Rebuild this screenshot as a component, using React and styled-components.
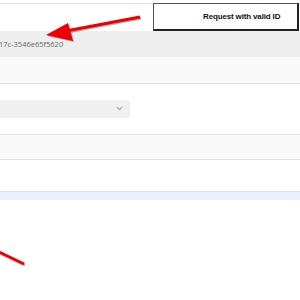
import React from 'react';
import styled, { createGlobalStyle } from 'styled-components';

const GlobalStyle = createGlobalStyle`
  html, body {
    margin: 0;
    padding: 0;
    background: #fff;
    width: 300px;
    height: 300px;
    overflow: hidden;
  }
`;

const Page = styled.div`
  position: relative;
  width: 300px;
  height: 300px;
  padding-top: 3px;
  box-sizing: border-box;
  font-family: "Liberation Sans", Arial, sans-serif;
`;

const TopBar = styled.div`
  display: flex;
  justify-content: flex-end;
  align-items: flex-start;
  height: 28px;
  border-top: 1px solid #e4e4e4;
  box-sizing: border-box;
`;

const RequestButton = styled.button`
  width: 146px;
  height: 28px;
  margin: -1px 1px 0 0;
  padding: 0 0 0 49px;
  box-sizing: border-box;
  background: #fff;
  border: 1px solid #555;
  border-right: 2px solid #222;
  border-bottom: 2px solid #222;
  font-family: "Liberation Sans", Arial, sans-serif;
  font-weight: bold;
  font-size: 8px;
  letter-spacing: -0.15px;
  color: #111;
  text-align: left;
`;

const Row = styled.div`
  display: flex;
  align-items: center;
  height: ${p => p.h}px;
  background: ${p => p.bg || '#fff'};
  border-bottom: ${p => (p.line ? `1px solid ${p.line}` : 'none')};
`;

const IdText = styled.span`
  font-family: "Open Sans", "Liberation Sans", sans-serif;
  font-size: 7.5px;
  color: #666;
  margin-left: -1px;
`;

const Select = styled.div`
  display: flex;
  align-items: center;
  justify-content: flex-end;
  width: 130px;
  height: 18px;
  margin-top: -1px;
  padding-right: 7px;
  box-sizing: border-box;
  background: #f0f0f0;
  border-radius: 0 3px 3px 0;
`;

const Overlay = styled.svg`
  position: absolute;
  left: 0;
  top: 0;
  pointer-events: none;
`;

const Chevron = () => (
  <svg width="7" height="5" viewBox="0 0 7 5">
    <path d="M0.8 1 L3.5 3.6 L6.2 1" fill="none" stroke="#aaa" strokeWidth="1.2" />
  </svg>
);

export default function App() {
  return (
    <Page>
      <GlobalStyle />
      <TopBar>
        <RequestButton>Request with valid ID</RequestButton>
      </TopBar>
      <Row h={26} bg="#eeeeee">
        <IdText>17c-3546e65f5620</IdText>
      </Row>
      <Row h={26} bg="#f9f9f9" line="#e0e0e0" />
      <Row h={50} line="#e2e2e2">
        <Select>
          <Chevron />
        </Select>
      </Row>
      <Row h={24} bg="#f9f9f9" line="#e0e0e0" />
      <Row h={31} line="#dfe1e6" />
      <Row h={8} bg="#e8f1fd" />
      <Overlay width="300" height="300" viewBox="0 0 300 300">
        <defs>
          <filter id="sh" x="-10%" y="-10%" width="130%" height="150%">
            <feDropShadow dx="1" dy="1" stdDeviation="0.6" floodColor="#000" floodOpacity="0.35" />
          </filter>
        </defs>
        <g filter="url(#sh)" fill="#ee0000" stroke="#ee0000">
          <line x1="140" y1="17" x2="66" y2="31" strokeWidth="3" />
          <polygon points="46,35 68,23 73,41" stroke="none" />
          <line x1="-3" y1="251" x2="24" y2="264" strokeWidth="3" />
        </g>
      </Overlay>
    </Page>
  );
}
